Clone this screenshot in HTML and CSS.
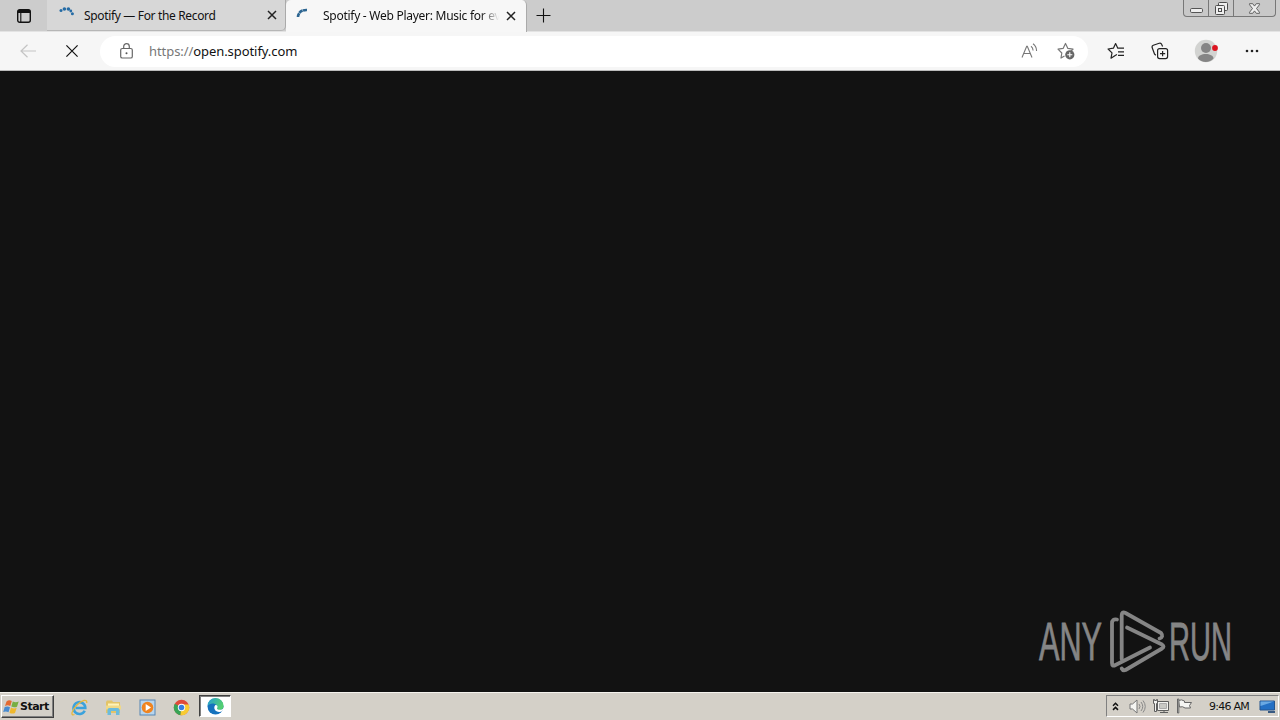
FILE: index.html
```html
<!DOCTYPE html>
<html lang="en">

<head>
    <meta charset="UTF-8">
    <meta name="viewport" content="width=device-width, initial-scale=1.0">
    <title>Spotify - Web Player</title>
    <link rel="stylesheet" href="styles.css">
</head>

<body>
    <div class="screen">

        <!-- tab strip -->
        <div class="tabs">
            <div class="tab-menu">
                <svg width="16" height="16" viewBox="0 0 16 16" fill="none" stroke="#111">
                    <rect x="1.7" y="1.7" width="12.6" height="12.6" rx="2" stroke-width="1.4" />
                    <path d="M2 3.5h12" stroke-width="3" />
                    <path d="M4.8 4v10" stroke-width="1.1" />
                </svg>
            </div>
            <div class="tab">
                <svg class="spinner" width="16" height="16" viewBox="0 0 16 16" fill="#246ba5">
                    <circle cx="2" cy="4.6" r="1.5" />
                    <circle cx="5.4" cy="3" r="1.8" />
                    <circle cx="9.4" cy="3" r="1.8" />
                    <circle cx="11.8" cy="5" r="1.4" />
                    <circle cx="13.4" cy="7.8" r="1.5" />
                </svg>
                <span class="title title-1">Spotify — For the Record</span>
                <svg class="close" width="10" height="10" viewBox="0 0 10 10" stroke="#222" stroke-width="1.5">
                    <path d="M1 1l8 8M9 1l-8 8" />
                </svg>
            </div>
            <div class="tab active">
                <svg class="spinner" width="16" height="16" viewBox="0 0 16 16" fill="none">
                    <path d="M2 10C2.2 5.5 5.5 2.800 11 3" stroke="#2c6591" stroke-width="2.600" stroke-dasharray="4 .4" />
                </svg>
                <span class="title title-2">Spotify - Web Player: Music for ev</span>
                <svg class="close" width="10" height="10" viewBox="0 0 10 10" stroke="#222" stroke-width="1.5">
                    <path d="M1 1l8 8M9 1l-8 8" />
                </svg>
            </div>
            <svg class="new-tab" width="15" height="15" viewBox="0 0 15 15" stroke="#111" stroke-width="1.1">
                <path d="M7.5 .5v14M.5 7.5h14" />
            </svg>
            <div class="controls">
                <span>
                    <svg class="minimize" width="13" height="7" viewBox="0 0 13 7"><rect x=".5" y="1.5" width="12" height="4" rx="1.2" fill="#eee" stroke="#555" /></svg>
                </span>
                <span>
                    <svg width="13" height="13" viewBox="0 0 13 13" fill="#eee" stroke="#4c4c4c">
                        <rect x="3.5" y=".5" width="9" height="8" rx="1" />
                        <rect x=".5" y="3.5" width="9" height="9" rx="1" />
                        <rect x="3.5" y="6.5" width="3" height="3" />
                    </svg>
                </span>
                <span>
                    <svg width="13" height="11" viewBox="0 0 13 11">
                        <path d="M1.500.7h3.200l1.800 2.400L8.300.7h3.200v1L8.500 5.500l3 3.800v1H8.300L6.500 7.900l-1.800 2.400H1.500v-1l3-3.800-3-3.800z" fill="#eee" stroke="#555" stroke-width=".9" />
                    </svg>
                </span>
            </div>
        </div>

        <!-- address bar -->
        <div class="toolbar">
            <svg class="back" width="16" height="14" viewBox="0 0 16 14" fill="none" stroke="#c4c4c4" stroke-width="1.2">
                <path d="M16 7H1M7.5 .7L1 7l6.5 6.3" />
            </svg>
            <svg class="stop" width="12" height="12" viewBox="0 0 12 12" stroke="#111" stroke-width="1.2">
                <path d="M.4 .4l11.2 11.2M11.6 .4L.4 11.6" />
            </svg>
            <div class="address">
                <svg class="lock" width="13" height="16" viewBox="0 0 13 16" fill="none" stroke="#666">
                    <rect x=".7" y="5.5" width="11.6" height="9.5" rx="1.6" stroke-width="1.2" />
                    <path d="M3.7 5.5V3.5a2.8 2.8 0 0 1 5.6 0v2" stroke-width="1.2" />
                    <circle cx="6.5" cy="10.2" r="1" fill="#555" stroke="none" />
                </svg>
                <span class="url"><i>https://</i>open.spotify.com</span>
                <svg class="read" width="17" height="16" viewBox="0 0 17 16" fill="none" stroke="#777" stroke-width="1.1">
                    <path d="M1 14.500L5.700 3.300h.6L11 14.500M2.700 10.500h6.600M10 3.300c1.400 1 2 2.200 2.100 4.200M12 .8c2.500 1.700 3.500 4 3.600 7.200" />
                </svg>
                <svg class="favorite" width="18" height="18" viewBox="0 0 18 18" fill="none">
                    <path d="M7.500 14L4 16l.8-5L1 7.200l5.100-.8L8.500 1.500l2.400 4.900 5.100.8-2.200 2" stroke="#777" stroke-width="1.2" stroke-linejoin="round" />
                    <circle cx="12.800" cy="12.800" r="4.600" fill="#666" />
                    <path d="M12.800 10.300v5M10.300 12.800h5" stroke="#fff" stroke-width="1.1" />
                </svg>
            </div>
            <div class="actions">
                <svg width="18" height="18" viewBox="0 0 18 18" fill="none" stroke="#222" stroke-width="1.2" stroke-linejoin="round">
                    <path d="M10 12.500L8.600 13.200 4 16.200l1-5.300L1.100 7l5.300-.8L8.600 1.500l2.200 4.700H17M11 9.800h6M11 13.300h6" />
                </svg>
                <svg width="18" height="18" viewBox="0 0 18 18" fill="none" stroke="#222" stroke-width="1.2" stroke-linejoin="round">
                    <rect x="6.600" y="6.600" width="10" height="10" rx="2" />
                    <path d="M11.600 9v5.200M9 11.600h5.200M4.800 13.200L3.500 12 1.200 5.800C.8 4.400 1.200 3.600 2.300 3.200l5.900-2c1.200-.4 2 0 2.400 1l1 2.300" />
                </svg>
                <svg width="24" height="24" viewBox="0 0 24 24">
                    <circle cx="12" cy="12" r="11.2" fill="#d2d3d1" />
                    <circle cx="12" cy="9" r="5" fill="#858585" />
                    <path d="M4 19.500c0-6 15.500-6 15.500 0-3.500 4.600-12 4.600-15.500 0z" fill="#858585" />
                    <circle cx="21" cy="9" r="2.900" fill="#dc1420" />
                </svg>
                <svg width="14" height="4" viewBox="0 0 14 4" fill="#222">
                    <circle cx="2" cy="2" r="1.3" />
                    <circle cx="7" cy="2" r="1.3" />
                    <circle cx="12" cy="2" r="1.3" />
                </svg>
            </div>
        </div>

        <!-- empty page with the watermark -->
        <div class="page">
            <svg class="watermark" width="200" height="66" viewBox="0 0 200 66">
                <text x="2" y="51" textLength="63" lengthAdjust="spacingAndGlyphs">ANY</text>
                <g fill="none" stroke="#858585" stroke-width="3.8" stroke-linejoin="round" stroke-linecap="round">
                    <path d="M80 10.500Q75 9.500 75 14.500V54Q75 58 78.500 56L113 38.500" />
                    <path d="M84.700 50V6.500Q84.700 2 88.500 4L124 24Q127 28 122.500 29.500" />
                    <path d="M90 18.500L125 35.500Q128 37.500 125 39.500L88.500 61Q86 62 84.700 59.500" />
                </g>
                <text x="132" y="51" textLength="63" lengthAdjust="spacingAndGlyphs">RUN</text>
            </svg>
        </div>

        <!-- taskbar -->
        <div class="taskbar">
            <div class="start">
                <svg width="17" height="16" viewBox="0 0 17 16">
                    <path d="M3.500 2.500Q6 .4 8.800 2L7.300 7Q4.700 5.600 2 7z" fill="#e36a31" />
                    <path d="M9.800 2.400Q12.500 4 15.700 2.500L14 7.700Q11.200 9 8.300 7.500z" fill="#78ae43" />
                    <path d="M1.700 8Q4.500 6.800 7 8.200L5.500 13.300Q3 11.800.2 13z" fill="#488bd0" />
                    <path d="M8 8.500Q10.800 10.100 13.700 8.800L12 14Q9 15.300 6.500 13.700z" fill="#efb82e" />
                </svg>
                <span>Start</span>
            </div>
            <div class="launch">
                <svg width="17" height="17" viewBox="0 0 17 17" fill="none">
                    <path d="M13.700 11.700A5.900 5.900 0 1 1 14.300 9H4.500" stroke="#3ba2dc" stroke-width="2.6" />
                    <path d="M3.500 15.500C-1 17.500.8 11 6 6S16.500-.5 15.700 4" stroke="#e6b83d" stroke-width="1.3" />
                </svg>
                <svg width="17" height="17" viewBox="0 0 17 17">
                    <path d="M1 3l1-1.500h5L8 3h7v11H1z" fill="#e3c468" />
                    <path d="M3 4.500h11v4H3z" fill="#fff3b8" />
                    <path d="M1 6.500h15v4H1z" fill="#f0d987" />
                    <path d="M2.500 16v-5q0-2 2-2h8q2 0 2 2v5H11v-4H6v4z" fill="#6bbbdc" />
                </svg>
                <svg width="17" height="17" viewBox="0 0 17 17">
                    <rect x="1" y="1" width="15" height="15" fill="#b8d5ed" stroke="#5786b4" />
                    <circle cx="8.500" cy="8.500" r="5.800" fill="#ef8420" />
                    <path d="M6.700 5l5.300 3.500L6.700 12z" fill="#fff" />
                </svg>
                <svg width="17" height="17" viewBox="0 0 17 17">
                    <circle cx="8.500" cy="8.500" r="7.700" fill="#e04a3a" />
                    <path d="M8.500 8.500L1.800 4.700A7.700 7.700 0 0 0 7.500 16.200z" fill="#38a456" />
                    <path d="M8.500 8.500h-.3L7.500 16.200A7.700 7.700 0 0 0 15.600 5.500H8.500z" fill="#f8cb33" />
                    <circle cx="8.500" cy="8.500" r="3.700" fill="#fff" />
                    <circle cx="8.500" cy="8.500" r="2.800" fill="#397ee0" />
                </svg>
            </div>
            <div class="running">
                <svg width="17" height="17" viewBox="0 0 17 17">
                    <defs>
                        <linearGradient id="wave" x1="0" y1="0" x2="1" y2=".4">
                            <stop offset="0" stop-color="#249dd8" />
                            <stop offset="1" stop-color="#54cf70" />
                        </linearGradient>
                    </defs>
                    <circle cx="8.500" cy="8.500" r="8" fill="#1672bd" />
                    <path d="M.5 8A8 8 0 0 1 16.500 8c.1 3-2 4-4.400 4-2 0-3-.7-2.300-1.700C11.200 7.500 8 5 4.500 5.700 2.500 6 1 7 .5 8z" fill="url(#wave)" />
                    <path d="M8 7.500c-2 3 .5 6.600 4.500 6.400 2 0 3.300-1 4.200-2.600L17 10c-1.500 2-5 2.200-6.500 1.200-.9-.6-.4-1.200 0-2 .4-1.500-1.300-3-2.500-1.700z" fill="#fff" />
                </svg>
            </div>

            <div class="tray">
                <svg width="7" height="9" viewBox="0 0 7 9" fill="none" stroke="#111" stroke-width="1.5">
                    <path d="M1 3.700L3.500 1.200 6 3.700M1 7.900l2.500-2.500L6 7.900" />
                </svg>
                <svg class="sound" width="17" height="15" viewBox="0 0 17 15" fill="none" stroke="#777">
                    <path d="M1 5h2.500L8 1v13l-4.500-4H1z" fill="#f5f5f2" />
                    <path d="M10 5q2 2.500 0 5M12 3q3.500 4.500 0 9M14 1.500q4.500 6 0 12" stroke="#888" />
                </svg>
                <svg class="network" width="17" height="16" viewBox="0 0 17 16" fill="#f2f2ef" stroke="#5e5e5e">
                    <path d="M4.500 3.500h11v9h-11zM7 14.500h8M11 12.500v2" />
                    <path d="M6.500 5.500h7v5h-7z" fill="#c9c9c5" stroke="#aaa" />
                    <path d="M.5 1.500h1v1h2v-1h1v4h-1v8h-2v-8h-1z" />
                </svg>
                <svg class="flag" width="17" height="16" viewBox="0 0 17 16" fill="#f5f5f2" stroke="#666">
                    <path d="M2.500 2.500Q5.500 1 8.500 3v1.500h7l-2 3 1 2.500H9Q7 8 3.500 9z" />
                    <path d="M1.500 1h1.300v14H1.500z" />
                </svg>
                <span class="clock">9:46 AM</span>
                <svg width="17" height="15" viewBox="0 0 17 15">
                    <path d="M1 2h14.500v9H1z" fill="#2470c4" stroke="#25558e" />
                    <path d="M1.500 2.500h13.500L1.500 7z" fill="#6aa9e3" />
                    <path d="M9 12h7v2H9z" fill="#385a82" />
                </svg>
            </div>
        </div>
    </div>
</body>

</html>
```

FILE: styles.css
```css
* {
    box-sizing: border-box;
}

body {
    margin: 0;
    font-family: "Noto Sans", "Open Sans", sans-serif;
    font-size: 12px;
    color: #111;
}

svg {
    display: block;
    flex-shrink: 0;
}

.screen {
    width: 1280px;
    height: 720px;
    display: flex;
    flex-direction: column;
    overflow: hidden;
}

.tabs {
    height: 32px;
    display: flex;
    background: #ccc;
    border-bottom: 1px solid #e3e3e3;
}

.tab-menu {
    width: 47px;
    padding: 8px 0 0 16px;
}

.tab {
    width: 239px;
    height: 31px;
    display: flex;
    align-items: center;
    padding-left: 12px;
    background: #d7d7d7;
    border-right: 1px solid #aaa;
    border-bottom: 1px solid #b6b6b6;
    border-radius: 0 0 5px 0;
}

.active {
    width: 241px;
    height: 32px;
    padding: 0 0 1px 10px;
    background: #f7f7f7;
    border-bottom: none;
    border-radius: 5px 5px 0 0;
}

.spinner {
    margin: -2px 9px 0 0;
}

.active .spinner {
    margin-right: 11px;
}

.title {
    width: 183px;
    white-space: nowrap;
}

.title-1 {
    letter-spacing: -.34px;
}

.title-2 {
    width: 179px;
    letter-spacing: -.27px;
    -webkit-mask-image: linear-gradient(to right, #000 158px, transparent 176px);
    mask-image: linear-gradient(to right, #000 158px, transparent 176px);
}

.close {
    margin-left: auto;
    margin-right: 8px;
}

.active .close {
    margin-right: 10px;
}

.new-tab {
    margin: 8px 0 0 9px;
}

.controls {
    width: 93px;
    height: 17px;
    display: flex;
    margin: 0 4px 0 auto;
    border: 1px solid #777;
    border-top: none;
    border-radius: 0 0 4px 4px;
    background: #c8c8c8;
}

.controls span {
    width: 25px;
    display: flex;
    align-items: center;
    justify-content: center;
    border-right: 1px solid #777;
}

.controls span:last-child {
    flex: 1;
    border: none;
}

.minimize {
    margin-top: 4px;
}

.toolbar {
    height: 39px;
    display: flex;
    align-items: center;
    background: #f6f6f6;
    border-bottom: 1px solid #bbb;
}

.back {
    margin-left: 20px;
}

.stop {
    margin-left: 30px;
}

.address {
    width: 988px;
    height: 31px;
    display: flex;
    align-items: center;
    margin-left: 22px;
    padding: 0 13px 0 20px;
    background: #fff;
    border-radius: 16px;
}

.url {
    margin-left: 16px;
    font-size: 13px;
    letter-spacing: -.07px;
}

.url i {
    font-style: normal;
    color: #777;
}

.read {
    margin-left: auto;
}

.favorite {
    margin-left: 19px;
}

.actions {
    display: flex;
    align-items: center;
    margin-left: 19px;
}

.actions svg:nth-child(2) {
    margin-left: 26px;
}

.actions svg:nth-child(3) {
    margin-left: 25px;
}

.actions svg:nth-child(4) {
    margin-left: 27px;
}

.page {
    flex: 1;
    display: flex;
    align-items: flex-end;
    justify-content: flex-end;
    padding: 0 43px 17px 0;
    background: #121212;
}

.watermark text {
    font-family: "Liberation Sans", sans-serif;
    font-size: 54px;
    fill: #858585;
    stroke: #858585;
    stroke-width: .8px;
}

.taskbar {
    height: 28px;
    display: flex;
    padding: 2px 1px 0;
    background: #d4d0c8;
    border-top: 1px solid #f4f2ed;
    font-family: "DejaVu Sans", sans-serif;
}

.start {
    width: 53px;
    height: 23px;
    display: flex;
    align-items: center;
    padding-left: 1px;
    border: 1px solid;
    border-color: #fff #404040 #404040 #fff;
    box-shadow: inset -1px -1px #808080;
    font-size: 11px;
    font-weight: bold;
    letter-spacing: -.5px;
}

.launch {
    display: flex;
    align-items: center;
    height: 24px;
    gap: 17px;
    margin-left: 17px;
}

.running {
    width: 32px;
    height: 22px;
    display: flex;
    align-items: center;
    justify-content: center;
    margin-left: 9px;
    background: #fff;
    border: 1px solid;
    border-color: #404040 #fff #fff #404040;
    box-shadow: inset 1px 1px #808080;
}

.tray {
    width: 173px;
    height: 22px;
    display: flex;
    align-items: center;
    margin-left: auto;
    padding-left: 5px;
    border: 1px solid;
    border-color: #808080 #fff #fff #808080;
}

.sound {
    margin-left: 10px;
}

.network {
    margin-left: 7px;
}

.flag {
    margin-left: 6px;
}

.clock {
    width: 50px;
    margin-left: 16px;
    font-size: 11px;
    letter-spacing: -.75px;
    white-space: nowrap;
}
```
